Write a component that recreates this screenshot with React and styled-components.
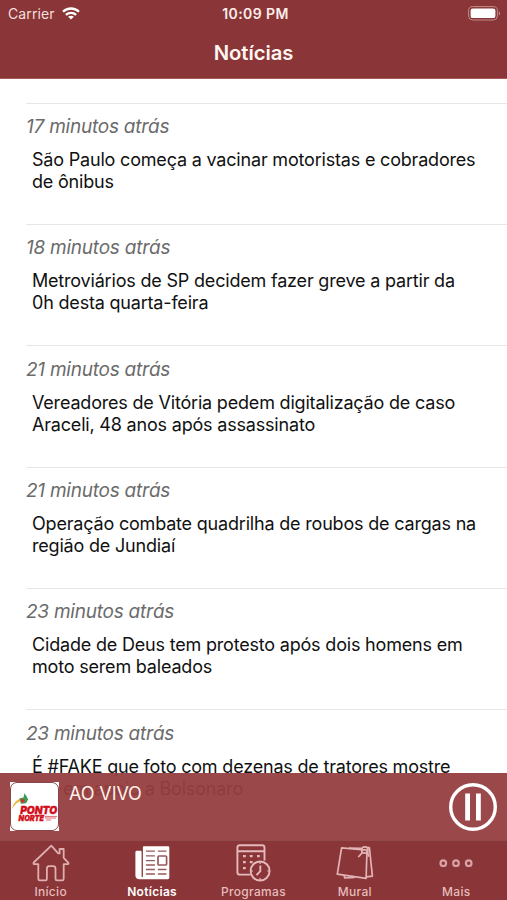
import React from "react";
import styled, { createGlobalStyle } from "styled-components";

const news = [
  {
    time: "17 minutos atrás",
    lines: ["São Paulo começa a vacinar motoristas e cobradores", "de ônibus"],
  },
  {
    time: "18 minutos atrás",
    lines: ["Metroviários de SP decidem fazer greve a partir da", "0h desta quarta-feira"],
  },
  {
    time: "21 minutos atrás",
    lines: ["Vereadores de Vitória pedem digitalização de caso", "Araceli, 48 anos após assassinato"],
  },
  {
    time: "21 minutos atrás",
    lines: ["Operação combate quadrilha de roubos de cargas na", "região de Jundiaí"],
  },
  {
    time: "23 minutos atrás",
    lines: ["Cidade de Deus tem protesto após dois homens em", "moto serem baleados"],
  },
  {
    time: "23 minutos atrás",
    lines: ["É #FAKE que foto com dezenas de tratores mostre", "ato em apoio a Bolsonaro"],
  },
];

const WifiIcon = () => (
  <svg width="18" height="13" viewBox="0 0 18 13" fill="none" stroke="#fff" strokeWidth="2.3">
    <path d="M1 4.7C5.4.4 12.6.4 17 4.7" />
    <path d="M3.9 7.9c2.9-2.8 7.3-2.8 10.2 0" />
    <path d="M9 12.6 6.1 9.8c1.6-1.4 4.2-1.4 5.8 0z" fill="#fff" stroke="none" />
  </svg>
);

const BatteryIcon = () => (
  <svg width="33" height="15" viewBox="0 0 33 15">
    <rect x="0.6" y="0.6" width="28.8" height="13.4" rx="4" fill="none" stroke="#c08a8b" strokeWidth="1" />
    <rect x="2.6" y="2.5" width="24.8" height="9.6" rx="2.2" fill="#fff" />
    <path d="M30.8 5.2c1.7.7 1.7 3.6 0 4.3z" fill="#c08a8b" />
  </svg>
);

const HomeIcon = () => (
  <svg width="38" height="38" viewBox="0 0 38 38" fill="none" stroke="#dfaeb0" strokeWidth="1.8" strokeLinejoin="round">
    <path d="M19.3 1.6 1.7 18.5c-.6 1 0 1.7.9 1.7h3.7v14.5c0 1.1.5 1.6 1.5 1.6h5.6c1 0 1.5-.5 1.5-1.6V24.6c0-1.6.9-2.5 2.3-2.5h4c1.5 0 2.3.9 2.3 2.5v10.1c0 1.1.5 1.6 1.5 1.6h5.2c1 0 1.5-.5 1.5-1.6V20.2h3.7c1 0 1.5-.8.8-1.6l-4.5-4.7V5h-4.1v4.4h-1.4z" />
  </svg>
);

const NewsIcon = () => (
  <svg width="38" height="38" viewBox="0 0 38 38">
    <path d="M9.9 3.6c0-.8.5-1.3 1.3-1.3h23.7c.9 0 1.4.5 1.4 1.3v30.2c0 .9-.5 1.4-1.4 1.4H6.4c-2.4 0-4-1.4-4-3.8V8.3c0-1 .6-1.6 1.5-1.6h3.5c.8 0 1.2.5 1.2 1.3v24.3c0 1.2 1.3 1.2 1.3 0z" fill="#fff" />
    <g stroke="#99595b" strokeWidth="1.3" fill="none">
      <path d="M12.9 7.2h9M12.9 11.9h9M12.9 16.6h9M12.9 21h9M12.9 25.5h9M12.9 30h9M24.9 7.2h8.6M24.9 25.5h8.6M24.9 30h8.6" />
      <rect x="25" y="12" width="8.6" height="9" rx="1" strokeWidth="1.7" />
    </g>
  </svg>
);

const CalendarIcon = () => (
  <svg width="38" height="38" viewBox="0 0 38 38" fill="none" stroke="#e5b9bb" strokeWidth="1.9">
    <path d="M16.4 30.6H5.8c-1.5 0-2.4-.9-2.4-2.4V3.7c0-1.5.9-2.4 2.4-2.4h22.3c1.5 0 2.4.9 2.4 2.4v12.8M3.4 7.3h27.1" />
    <path d="M9 12.1h2.8M15.8 12.1h2.8M23 12.1h2.8M9 18.1h2.8M15.8 18.1h2.8M9 24.2h2.8" strokeWidth="2.3" />
    <circle cx="26.1" cy="27" r="9.5" />
    <path d="M26.3 21.5v5.7l-3.8 4" />
    <path d="M26.1 18v2M26.1 34v2M17 27h2M33.2 27h2" strokeWidth="1.2" />
  </svg>
);

const NotesIcon = () => (
  <svg width="38" height="38" viewBox="0 0 38 38" fill="none" stroke="#e2b3b5" strokeWidth="1.7" strokeLinejoin="round">
    <path d="M5.6 3.9 31 6.1l-.9 28.3L1.3 30.1z" />
    <path d="m31.4 3.4 2 .4 3 28.4-6.1.6M25 4.3l-12-.1M8.2 31.5l.5 2.5 10.1-.7" />
    <circle cx="28.8" cy="6" r="3.2" />
    <path d="M26.6 8.4 22.3 13M31.5 7.6l1.1 5.2" />
  </svg>
);

const MoreIcon = () => (
  <svg width="38" height="38" viewBox="0 0 38 38" fill="none" stroke="#d8a1a3" strokeWidth="2.2">
    <circle cx="6.3" cy="19.2" r="2.8" />
    <circle cx="19" cy="19.2" r="2.8" />
    <circle cx="31.7" cy="19.2" r="2.8" />
  </svg>
);

const PauseIcon = () => (
  <svg width="50" height="50" viewBox="0 0 50 50">
    <circle cx="25" cy="25" r="22.3" fill="none" stroke="#fff" strokeWidth="3.4" />
    <path d="M17.2 11.5h4.8v27h-4.8zM28 11.5h4.8v27H28z" fill="#fff" />
  </svg>
);

const StationLogo = () => (
  <svg width="49" height="49" viewBox="0 0 49 49">
    <rect width="49" height="49" fill="#fff" />
    <rect x="0.5" y="0.5" width="48" height="48" rx="6.5" fill="#fff" stroke="#8a4648" strokeWidth="1" />
    <path d="M2 27.5c1-6 4-9.2 8.3-11l2.4 2.1C7.5 19.8 4.8 22.5 2 27.5z" fill="#efb93d" />
    <path d="m9.5 16.2 4-.7.8-4.2 2.3 3 1.5 3.3-2 3.6-5.2.5z" fill="#3f9a57" />
    <path d="m10.3 17.7 2.8-.6 1.9 1.6-2.9 2.6z" fill="#d92f2f" />
    <g fontFamily="Inter, sans-serif" fontWeight="900" fontStyle="italic" fill="#d30d18" stroke="#d30d18" strokeWidth="0.35">
      <text x="10.2" y="31.6" fontSize="10.8" textLength="37" lengthAdjust="spacingAndGlyphs">PONTO</text>
      <text x="8.6" y="38.6" fontSize="7.6" textLength="25.5" lengthAdjust="spacingAndGlyphs">NORTE</text>
    </g>
    <path d="M35 34.4h12M35 36h11M36 38h5" stroke="#de6b70" strokeWidth="1" />
  </svg>
);

const tabs = [
  { label: "Início", icon: <HomeIcon /> },
  { label: "Notícias", icon: <NewsIcon />, active: true },
  { label: "Programas", icon: <CalendarIcon /> },
  { label: "Mural", icon: <NotesIcon /> },
  { label: "Mais", icon: <MoreIcon /> },
];

const App = () => {
  return (
    <>
      <GlobalStyle />
      <Screen>
        <Header>
          <StatusBar>
            <Carrier>
              Carrier
              <WifiIcon />
            </Carrier>
            <Clock>10:09 PM</Clock>
            <Battery>
              <BatteryIcon />
            </Battery>
          </StatusBar>
          <Title>Notícias</Title>
        </Header>

        <Feed>
          {news.map((item, index) => (
            <Item key={index}>
              <Time>{item.time}</Time>
              {item.lines.map((line) => (
                <Line key={line}>{line}</Line>
              ))}
            </Item>
          ))}
        </Feed>

        <Bottom>
          <Player>
            <StationLogo />
            <Live>AO VIVO</Live>
            <PauseIcon />
          </Player>
          <TabBar>
            {tabs.map((tab) => (
              <Tab key={tab.label} $active={tab.active}>
                {tab.icon}
                <span>{tab.label}</span>
              </Tab>
            ))}
          </TabBar>
        </Bottom>
      </Screen>
    </>
  );
};

const GlobalStyle = createGlobalStyle`
  * {
    box-sizing: border-box;
  }
  body {
    margin: 0;
    font-family: Inter, "Liberation Sans", sans-serif;
  }
  svg {
    display: block;
    flex-shrink: 0;
  }
`;

const Screen = styled.div`
  position: relative;
  display: flex;
  flex-direction: column;
  width: 507px;
  height: 900px;
  overflow: hidden;
  background-color: #fff;
`;

const Header = styled.header`
  flex-shrink: 0;
  height: 79px;
  background-color: #8a3537;
  border-bottom: 1px solid #a75a58;
  color: #fff;
`;

const StatusBar = styled.div`
  display: grid;
  grid-template-columns: 1fr auto 1fr;
  align-items: center;
  height: 27px;
  padding: 0 6px 0 8px;
`;

const Carrier = styled.div`
  display: flex;
  align-items: center;
  gap: 7px;
  font-size: 14px;
  letter-spacing: 0.1px;
  color: #f5dfdd;
`;

const Clock = styled.div`
  padding-left: 2px;
  font-size: 14px;
  font-weight: 600;
  letter-spacing: 0.4px;
  color: #fdeeea;
`;

const Battery = styled.div`
  justify-self: end;
`;

const Title = styled.h1`
  margin: 0;
  font-size: 20.3px;
  font-weight: 600;
  line-height: 51px;
  letter-spacing: -0.05px;
  text-align: center;
  color: #fff6f2;
`;

const Feed = styled.main`
  flex: 1;
  min-height: 0;
  overflow: hidden;
  padding-top: 23.5px;
`;

const Item = styled.article`
  height: 121.4px;
  margin-left: 26px;
  padding-top: 9.4px;
  border-top: 1px solid #e6e6e6;
`;

const Time = styled.div`
  margin-bottom: 8px;
  font-size: 19px;
  font-style: italic;
  line-height: 28px;
  letter-spacing: -0.24px;
  color: #6b6b6b;
`;

const Line = styled.div`
  padding-left: 6px;
  font-size: 18px;
  line-height: 22px;
  letter-spacing: -0.19px;
  white-space: nowrap;
  color: #111;
`;

const Bottom = styled.footer`
  position: absolute;
  left: 0;
  right: 0;
  bottom: 0;
`;

const Player = styled.div`
  display: flex;
  align-items: center;
  height: 67px;
  padding: 0 9px 0 10px;
  background-color: rgba(150, 62, 64, 0.95);
`;

const Live = styled.div`
  flex: 1;
  align-self: flex-start;
  padding: 9px 0 0 10px;
  font-size: 18px;
  line-height: 24px;
  letter-spacing: -0.1px;
  color: #fff0e8;
`;

const TabBar = styled.nav`
  display: grid;
  grid-template-columns: repeat(5, 1fr);
  height: 60px;
  border-top: 1px solid #92494a;
  background-color: #8a3537;
`;

const Tab = styled.div`
  display: flex;
  flex-direction: column;
  align-items: center;
  padding-top: 3px;
  font-size: 12px;
  font-weight: ${(props) => (props.$active ? 600 : 500)};
  line-height: 16px;
  letter-spacing: 0.3px;
  color: ${(props) => (props.$active ? "#fff" : "#e6bcbc")};
  span {
    margin-top: 2px;
  }
`;

export default App;
